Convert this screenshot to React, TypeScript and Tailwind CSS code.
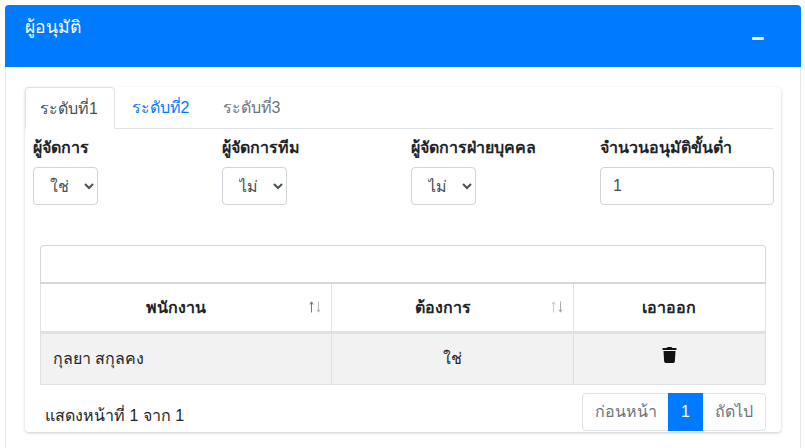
import { FaTrash } from "react-icons/fa";

const font = "font-['Liberation_Sans','Noto_Sans','DejaVu_Sans',sans-serif]";

function Field({ label, value }: { label: string; value: string }) {
  return (
    <div className="w-[189px] shrink-0">
      <div className="h-[38px] font-bold leading-[38px] text-[#212529]">{label}</div>
      <select
        defaultValue={value}
        className="h-[38px] w-[65px] rounded-[4px] border border-[#ced4da] bg-white px-3 text-[#495057]"
      >
        <option>ใช่</option>
        <option>ไม่</option>
      </select>
    </div>
  );
}

// thin up/down sort arrows in the table header
function SortArrows({ up, down }: { up: string; down: string }) {
  return (
    <svg className="absolute right-[10px] top-[17px]" width="12" height="12" viewBox="0 0 12 12" fill="none">
      <path d="M2.5 11.5V1M1 3.5 2.5 .8 4 3.5" stroke={up} />
      <path d="M9.5 .5V11M8 8.5 9.5 11.2 11 8.5" stroke={down} />
    </svg>
  );
}

export default function App() {
  return (
    <div className={`${font} min-h-[448px] bg-white px-[5px] pt-[5px] text-base text-[#212529]`}>
      <div className="h-[443px] w-[796px] rounded-t-[4px] border-x border-[#e6e7e9]">
        {/* Card header */}
        <div className="-mx-px flex h-[62px] justify-between rounded-t-[4px] bg-[#007bff] pl-5 pr-[37px] text-white">
          <span className="pt-[9px] text-[17.6px] leading-[26px]">ผู้อนุมัติ</span>
          <span className="mt-[32px] h-[3px] w-3 rounded-[1px] bg-[#e8f3ff]" />
        </div>

        <div className="px-[19px] pt-5">
          <div className="h-[345px] rounded-[4px] bg-white shadow-[0_1px_3px_rgba(0,0,0,0.2)]">
            {/* Tabs */}
            <div className="mr-2 flex h-[42px] border-b border-[#dee2e6]">
              <div className="h-[42px] w-[90px] rounded-t-[4px] border border-b-white border-[#dee2e6] bg-white pr-[2px] text-center leading-[41px] text-[#495057]">
                ระดับที่1
              </div>
              <div className="w-[91px] text-center leading-[41px] text-[#007bff]">ระดับที่2</div>
              <div className="w-[91px] text-center leading-[41px] text-[#6c757d]">ระดับที่3</div>
            </div>

            {/* Approver settings */}
            <div className="flex pl-2">
              <Field label="ผู้จัดการ" value="ใช่" />
              <Field label="ผู้จัดการทีม" value="ไม่" />
              <Field label="ผู้จัดการฝ่ายบุคคล" value="ไม่" />
              <div className="w-[174px] shrink-0">
                <div className="h-[38px] whitespace-nowrap font-bold leading-[38px]">จำนวนอนุมัติขั้นต่ำ</div>
                <input
                  defaultValue="1"
                  className="h-[38px] w-full rounded-[4px] border border-[#ced4da] bg-white px-3 text-[#495057]"
                />
              </div>
            </div>

            {/* Table */}
            <div className="mt-10 ml-[15px] w-[726px]">
              <div className="h-[39px] rounded-t-[4px] border border-b-2 border-[#d5d8da] bg-white" />
              <div className="grid grid-cols-[291px_242px_191px] border-x border-[#dee2e6]">
                <div className="relative flex h-[50px] items-center justify-center border-r border-b-[3px] border-[#dee2e6] pr-5 font-bold">
                  พนักงาน
                  <SortArrows up="#777" down="#bbb" />
                </div>
                <div className="relative flex h-[50px] items-center justify-center border-r border-b-[3px] border-[#dee2e6] pr-5 font-bold">
                  ต้องการ
                  <SortArrows up="#ccc" down="#aaa" />
                </div>
                <div className="flex h-[50px] items-center justify-center border-b-[3px] border-[#dee2e6] pr-[2px] font-bold">
                  เอาออก
                </div>
                <div className="flex h-[51px] items-center border-r border-b border-[#dee2e6] bg-[#f2f2f2] pl-3">
                  กุลยา สกุลคง
                </div>
                <div className="flex h-[51px] items-center justify-center border-r border-b border-[#dee2e6] bg-[#f2f2f2]">
                  ใช่
                </div>
                <div className="flex h-[51px] justify-center border-b border-[#dee2e6] bg-[#f2f2f2] pt-[13px]">
                  <FaTrash className="h-4 w-[15px] text-[#111]" />
                </div>
              </div>

              {/* Footer */}
              <div className="flex items-center justify-between pt-2">
                <span className="pl-[5px] pt-[8px]">แสดงหน้าที่ 1 จาก 1</span>
                <div className="flex h-[38px] items-stretch rounded-[4px] border border-[#dee2e6] text-[#6c757d]">
                  <span className="flex w-[85px] items-center justify-center">ก่อนหน้า</span>
                  <span className="-my-px flex w-[35px] items-center justify-center bg-[#007bff] text-white">1</span>
                  <span className="flex w-[62px] items-center justify-center">ถัดไป</span>
                </div>
              </div>
            </div>
          </div>
        </div>
      </div>
    </div>
  );
}
